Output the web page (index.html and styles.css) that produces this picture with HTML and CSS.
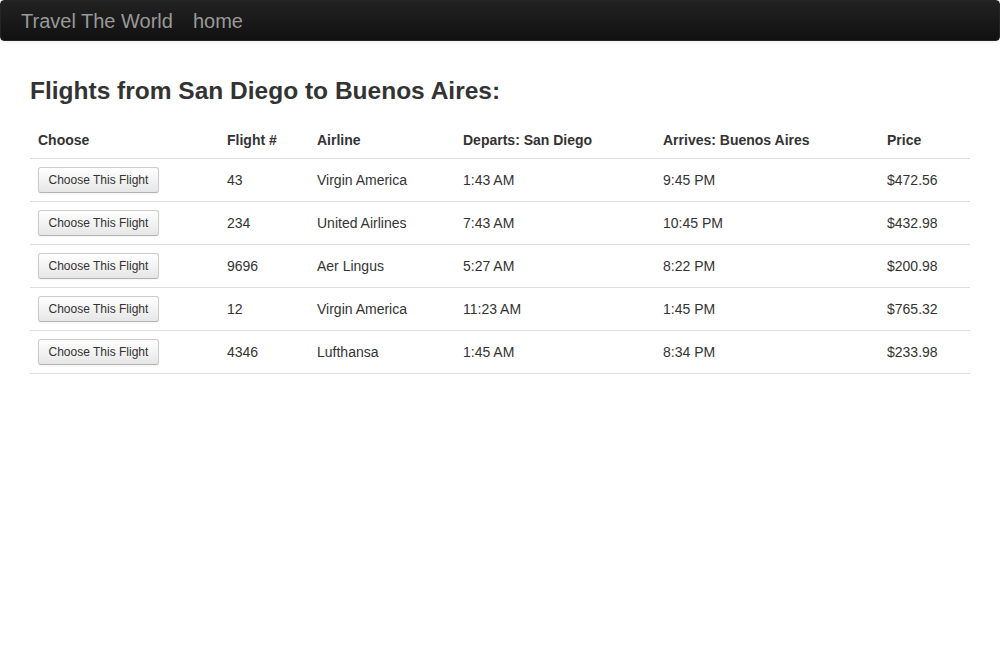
FILE: index.html
```html
<!DOCTYPE html>
<html>
<head>
<meta charset="utf-8">
<title>Travel The World</title>
<link rel="stylesheet" href="styles.css">
</head>
<body>
<nav class="navbar">
  <a class="brand" href="#">Travel The World</a>
  <a class="nav-link" href="#">home</a>
</nav>
<main class="container">
  <h3 class="title">Flights from San Diego to Buenos Aires:</h3>
  <table class="flights">
    <thead>
      <tr>
        <th class="c-choose">Choose</th>
        <th class="c-num">Flight #</th>
        <th class="c-air">Airline</th>
        <th class="c-dep">Departs: San Diego</th>
        <th class="c-arr">Arrives: Buenos Aires</th>
        <th class="c-price">Price</th>
      </tr>
    </thead>
    <tbody>
      <tr><td><button class="btn">Choose This Flight</button></td><td>43</td><td>Virgin America</td><td>1:43 AM</td><td>9:45 PM</td><td>$472.56</td></tr>
      <tr><td><button class="btn">Choose This Flight</button></td><td>234</td><td>United Airlines</td><td>7:43 AM</td><td>10:45 PM</td><td>$432.98</td></tr>
      <tr><td><button class="btn">Choose This Flight</button></td><td>9696</td><td>Aer Lingus</td><td>5:27 AM</td><td>8:22 PM</td><td>$200.98</td></tr>
      <tr><td><button class="btn">Choose This Flight</button></td><td>12</td><td>Virgin America</td><td>11:23 AM</td><td>1:45 PM</td><td>$765.32</td></tr>
      <tr><td><button class="btn">Choose This Flight</button></td><td>4346</td><td>Lufthansa</td><td>1:45 AM</td><td>8:34 PM</td><td>$233.98</td></tr>
    </tbody>
  </table>
</main>
</body>
</html>
```
FILE: styles.css
```css
html, body {
  margin: 0;
  padding: 0;
}
body {
  font-family: "Liberation Sans", Arial, Helvetica, sans-serif;
  font-size: 14px;
  line-height: 20px;
  color: #333;
  background: #fff;
}
.navbar {
  display: flex;
  align-items: center;
  height: 41px;
  box-sizing: border-box;
  padding: 0 0 0 20px;
  gap: 20px;
  background: linear-gradient(to bottom, #222 0%, #111 100%);
  border: 1px solid #252525;
  border-radius: 4px;
  box-shadow: 0 1px 4px rgba(0, 0, 0, 0.065);
}
.navbar a {
  color: #999;
  text-decoration: none;
  font-size: 20px;
  line-height: 20px;
}
.container {
  width: 940px;
  margin: 0 auto;
}
.title {
  margin: 30px 0 11px;
  font-size: 24.5px;
  line-height: 40px;
  font-weight: bold;
  color: #333;
}
.flights {
  width: 100%;
  border-collapse: collapse;
  border-spacing: 0;
}
.flights th,
.flights td {
  padding: 8px;
  text-align: left;
  vertical-align: middle;
  line-height: 20px;
}
.flights th {
  font-weight: bold;
  border-bottom: 1px solid #ddd;
}
.flights td {
  border-bottom: 1px solid #ddd;
}
.c-choose { width: 173px; }
.c-num { width: 74px; }
.c-air { width: 130px; }
.c-dep { width: 184px; }
.c-arr { width: 208px; }
.btn {
  display: block;
  box-sizing: border-box;
  height: 26px;
  padding: 0 9.5px;
  font-family: "Liberation Sans", Arial, Helvetica, sans-serif;
  font-size: 12px;
  line-height: 24px;
  color: #333;
  background: linear-gradient(to bottom, #fff 0%, #e6e6e6 100%);
  border: 1px solid #ccc;
  border-bottom-color: #b3b3b3;
  border-radius: 3px;
  box-shadow: inset 0 1px 0 rgba(255,255,255,0.2), 0 1px 2px rgba(0,0,0,0.05);
  cursor: pointer;
}
```
